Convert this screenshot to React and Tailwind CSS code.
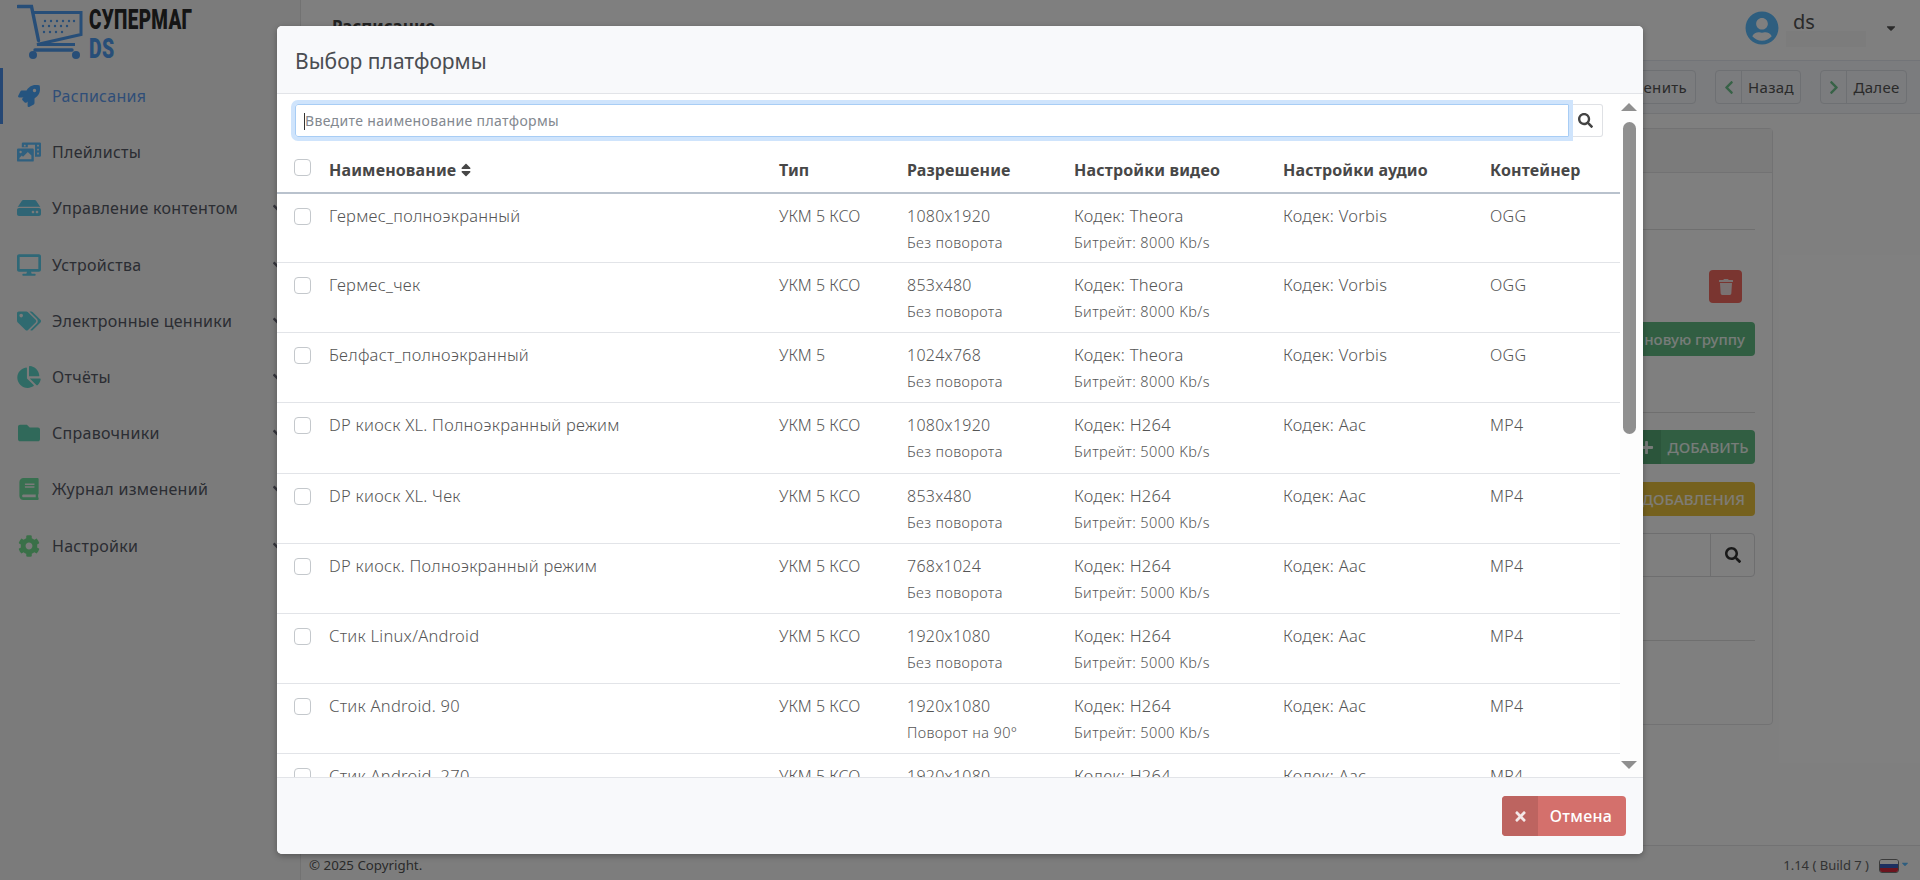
import React from "react";
import { FaRocket, FaPhotoVideo, FaHdd, FaDesktop, FaTags, FaChartPie, FaFolder, FaBook, FaCog, FaSearch, FaTimes, FaPlus, FaTrash, FaChevronLeft, FaChevronRight, FaUserCircle, FaSort, FaCaretDown, FaAngleDown } from "react-icons/fa";

const menu = [
  { t: "Расписания", I: FaRocket, c: "text-[#4aa8ff]", active: true },
  { t: "Плейлисты", I: FaPhotoVideo, c: "text-[#5ec0ff]" },
  { t: "Управление контентом", I: FaHdd, c: "text-[#5ecaea]", arrow: true },
  { t: "Устройства", I: FaDesktop, c: "text-[#5ed0ee]", arrow: true },
  { t: "Электронные ценники", I: FaTags, c: "text-[#5ed4e0]", arrow: true },
  { t: "Отчёты", I: FaChartPie, c: "text-[#5ed6ca]", arrow: true },
  { t: "Справочники", I: FaFolder, c: "text-[#60d2b4]", arrow: true },
  { t: "Журнал изменений", I: FaBook, c: "text-[#70e0a0]", arrow: true },
  { t: "Настройки", I: FaCog, c: "text-[#74e090]", arrow: true },
];

const T = "Кодек: Theora";
const H = "Кодек: H264";
const rows = [
  ["Гермес_полноэкранный", "УКМ 5 КСО", "1080x1920", "Без поворота", T, "Битрейт: 8000 Kb/s", "Кодек: Vorbis", "OGG"],
  ["Гермес_чек", "УКМ 5 КСО", "853x480", "Без поворота", T, "Битрейт: 8000 Kb/s", "Кодек: Vorbis", "OGG"],
  ["Белфаст_полноэкранный", "УКМ 5", "1024x768", "Без поворота", T, "Битрейт: 8000 Kb/s", "Кодек: Vorbis", "OGG"],
  ["DP киоск XL. Полноэкранный режим", "УКМ 5 КСО", "1080x1920", "Без поворота", H, "Битрейт: 5000 Kb/s", "Кодек: Aac", "MP4"],
  ["DP киоск XL. Чек", "УКМ 5 КСО", "853x480", "Без поворота", H, "Битрейт: 5000 Kb/s", "Кодек: Aac", "MP4"],
  ["DP киоск. Полноэкранный режим", "УКМ 5 КСО", "768x1024", "Без поворота", H, "Битрейт: 5000 Kb/s", "Кодек: Aac", "MP4"],
  ["Стик Linux/Android", "УКМ 5 КСО", "1920x1080", "Без поворота", H, "Битрейт: 5000 Kb/s", "Кодек: Aac", "MP4"],
  ["Стик Android. 90", "УКМ 5 КСО", "1920x1080", "Поворот на 90°", H, "Битрейт: 5000 Kb/s", "Кодек: Aac", "MP4"],
  ["Стик Android. 270", "УКМ 5 КСО", "1920x1080", "Поворот на 270°", H, "Битрейт: 5000 Kb/s", "Кодек: Aac", "MP4"],
];

function Check() {
  return <span className="block w-[17px] h-[17px] rounded-[4px] border border-[#c4c8cc] bg-white" />;
}

function Logo() {
  return (
    <div className="flex items-start h-[68px] pl-[17px] pt-[4px]">
      <svg width="66" height="56" viewBox="0 0 66 56" className="shrink-0 text-[#4f9cf0]" fill="none" stroke="currentColor">
        <path d="M1 2.5h13.5l7 34" strokeWidth="3.4" strokeLinecap="round" />
        <path d="M15 8.5h49v22l-44 10h38" strokeWidth="3" />
        <circle cx="16" cy="51" r="4" fill="currentColor" stroke="none" />
        <circle cx="59" cy="51" r="4" fill="currentColor" stroke="none" />
        <path d="M18 46h37" strokeWidth="3.4" strokeLinecap="round" />
        <g stroke="none" fill="currentColor">
          <circle cx="28" cy="17" r="1.2" /><circle cx="34" cy="17" r="1.2" /><circle cx="40" cy="17" r="1.2" /><circle cx="46" cy="17" r="1.2" /><circle cx="52" cy="17" r="1.2" /><circle cx="57" cy="17" r="1.2" />
          <circle cx="26" cy="22" r="1.2" /><circle cx="32" cy="22" r="1.2" /><circle cx="38" cy="22" r="1.2" /><circle cx="44" cy="22" r="1.2" /><circle cx="50" cy="22" r="1.2" />
          <circle cx="27" cy="28" r="1.2" /><circle cx="33" cy="28" r="1.2" /><circle cx="39" cy="28" r="1.2" /><circle cx="45" cy="28" r="1.2" />
        </g>
      </svg>
      <div className="ml-[6px] flex flex-col font-['Roboto',sans-serif]">
        <span className="block origin-left scale-x-[0.7] font-black text-[27px] leading-[28px] text-[#2a2a2a] tracking-[0.5px] whitespace-nowrap mt-[2px] h-[30px]">СУПЕРМАГ</span>
        <span className="block origin-left scale-x-[0.72] font-black text-[27px] leading-[26px] text-[#4f9cf0] tracking-[0.5px]">DS</span>
      </div>
    </div>
  );
}

function Sidebar() {
  return (
    <aside className="w-[300px] shrink-0 bg-[#f6f6f6] h-full">
      <Logo />
      <nav className="flex flex-col">
        {menu.map(({ t, I, c, active, arrow }) => (
          <div key={t} className={"h-[56.2px] flex items-center pl-[17px] border-l-[3px] " + (active ? "border-[#4a8fe8] text-[#5e9cf0]" : "border-transparent text-[#565a66]")}>
            <span className="w-[35px] shrink-0 -ml-[3px] flex"><I className={"w-[24px] h-[22px] " + c} /></span>
            <span className="text-[16px] whitespace-nowrap tracking-[0.28px]">{t}</span>
            {arrow && <FaAngleDown className="ml-auto mr-[14px] w-[16px] h-[16px] text-[#6a6a78]" />}
          </div>
        ))}
      </nav>
    </aside>
  );
}

function ToolBtn({ icon, label, w }) {
  return (
    <div className={"h-[34px] rounded-[4px] border border-[#dde0e6] flex items-center text-[15px] tracking-[0.3px] text-[#555] " + w}>
      <span className="w-[26px] h-full border-r border-[#dde0e6] flex items-center justify-center text-[#6fc48e]">{icon}</span>
      <span className="flex-1 text-center">{label}</span>
    </div>
  );
}

function Background() {
  return (
    <div className="absolute inset-0 flex bg-white">
      <Sidebar />
      <main className="flex-1 min-w-0 flex flex-col border-l border-[#e4e4e4]">
        <header className="h-[61px] flex items-start pl-[31px] pr-[22px] border-b border-[#e4e8f0]">
          <span className="mt-[14px] text-[17px] font-bold text-[#444]">Расписание</span>
          <div className="ml-auto flex items-start pt-[11px]">
            <FaUserCircle className="w-[34px] h-[34px] text-[#5cbcff]" />
            <div className="ml-[7px] w-[98px] flex flex-col">
              <span className="text-[20px] leading-[22px] ml-[7px] text-[#555]">ds</span>
              <span className="h-[16px] w-[80px] -mt-[2px] bg-[#f8f8f8]" />
            </div>
            <FaCaretDown className="mt-[10px] w-[14px] h-[14px] text-[#555]" />
          </div>
        </header>
        <div className="h-[53px] bg-[#f6f8fc] border-b border-[#e4e6ea] flex items-center justify-end gap-[19px] pr-[13px]">
          <div className="h-[34px] w-[130px] rounded-[4px] border border-[#dde0e6] flex items-center justify-end pr-[8px] text-[15px] tracking-[0.3px] text-[#555]">Применить</div>
          <ToolBtn icon={<FaChevronLeft className="w-[14px] h-[15px]" />} label="Назад" w="w-[86px]" />
          <ToolBtn icon={<FaChevronRight className="w-[14px] h-[15px]" />} label="Далее" w="w-[87px]" />
        </div>
        <div className="flex-1 min-h-0 flex flex-col pl-[30px] pr-[147px] pt-[14px]">
          <section className="h-[597px] rounded-[4px] border border-[#e4e4e6] flex flex-col items-end pr-[17px] bg-white">
            <div className="self-stretch -mr-[17px] h-[44px] bg-[#f6f6f6] border-b border-[#e4e4e6]" />
            <div className="mt-[56px] w-full h-px bg-[#dedede]" />
            <div className="mt-[40px] mr-[13px] w-[33px] h-[33px] rounded-[4px] bg-[#f46a60] flex items-center justify-center"><FaTrash className="w-[14px] h-[16px] text-[#f4e4e4]" /></div>
            <div className="mt-[19px] h-[34px] w-[250px] rounded-[4px] bg-[#62bc84] flex items-center justify-end pr-[10px] text-[15px] text-white/90 font-medium">Создать новую группу</div>
            <div className="mt-[56px] w-full h-px bg-[#dedede]" />
            <div className="mt-[17px] h-[34px] w-[250px] rounded-[4px] bg-[#62bc84] flex items-center text-[15px] text-white/90 font-medium overflow-hidden">
              <span className="ml-auto h-full w-[30px] bg-[#56aa76] flex items-center justify-center"><FaPlus className="w-[15px] h-[15px]" /></span>
              <span className="w-[94px] text-center">ДОБАВИТЬ</span>
            </div>
            <div className="mt-[18px] h-[34px] w-[250px] rounded-[4px] bg-[#eac23c] flex items-center justify-end pr-[10px] text-[15px] text-white/90 font-medium whitespace-nowrap overflow-hidden">ДЛЯ ДОДОБАВЛЕНИЯ</div>
            <div className="mt-[17px] h-[44px] w-[300px] rounded-[4px] border border-[#dcdcdf] flex justify-end">
              <span className="w-[44px] h-full border-l border-[#dcdcdf] flex items-center justify-center"><FaSearch className="w-[16px] h-[16px] text-[#333]" /></span>
            </div>
            <div className="mt-[63px] w-full h-px bg-[#dedede]" />
          </section>
        </div>
        <footer className="h-[35px] border-t border-[#e4e4e6] bg-[#fafafa] flex items-center pl-[8px] pr-[10px] pt-[6px] text-[13.3px] text-[#555]">
          <span>© 2025 Copyright.</span>
          <span className="ml-auto text-[13px] text-[#666]">1.14 ( Build 7 )</span>
          <span className="ml-[10px] w-[20px] h-[14px] rounded-[3px] overflow-hidden flex flex-col border border-[#777]">
            <span className="flex-1 bg-white" /><span className="flex-1 bg-[#3a5fc0]" /><span className="flex-1 bg-[#d8283c]" />
          </span>
          <FaCaretDown className="w-[10px] h-[10px] ml-[1px] -mt-[4px] text-[#5cbcff]" />
        </footer>
      </main>
    </div>
  );
}

function Modal() {
  const td = "pl-[12px] pt-[10px] leading-[24px] whitespace-nowrap tracking-[0.26px]";
  const big = td + " text-[16.5px]";
  const sub = "text-[14.5px] mt-[3px] leading-[22px] tracking-[0.4px]";
  const th = "pl-[12px] font-bold pb-[3px] tracking-[0.15px]";
  return (
    <div className="relative w-[1366px] h-[828px] mt-[26px] rounded-[5px] bg-white flex flex-col overflow-hidden shadow-[0_2px_6px_rgba(0,0,0,0.3)]">
      <header className="h-[68px] shrink-0 bg-[#f8f9fb] border-b border-[#e2e4e8] flex items-center pl-[18px] pt-[5px] text-[21px] text-[#4a4d52]">
        Выбор платформы
      </header>
      <div className="flex-1 min-h-0 flex">
        <div className="w-[1343px] shrink-0 overflow-hidden">
          <div className="flex pl-[18px] pt-[10px] pr-[17px] h-[57px]">
            <div className="relative flex-1 h-[33px] rounded-l-[3px] border border-[#a8cdf5] ring-4 ring-[#cfe4fc]">
              <input readOnly placeholder="Введите наименование платформы" className="w-full h-full outline-none pl-[9px] text-[14px] tracking-[0.35px] text-[#555] placeholder:text-[#83888f]" />
              <span className="absolute left-[8px] top-[8px] h-[17px] w-px bg-[#333]" />
            </div>
            <button className="w-[34px] h-[33px] rounded-r-[3px] border border-l-0 border-[#dfe1e5] flex items-center justify-center"><FaSearch className="w-[15px] h-[15px] text-[#444]" /></button>
          </div>
          <table className="w-[1343px] table-fixed border-collapse text-[16px] font-light text-[#555]">
            <colgroup>
              <col className="w-[40px]" /><col className="w-[450px]" /><col className="w-[128px]" /><col className="w-[167px]" /><col className="w-[209px]" /><col className="w-[207px]" /><col className="w-[142px]" />
            </colgroup>
            <thead>
              <tr className="h-[41.5px] border-b-[2px] border-[#b9c2cd] text-left text-[16px] text-[#474747]">
                <th className="pl-[17px] align-top pt-[8px]"><Check /></th>
                <th className={th}><span className="inline-flex items-center gap-[4px]">Наименование <FaSort className="w-[12px] h-[16px]" /></span></th>
                <th className={th}>Тип</th>
                <th className={th}>Разрешение</th>
                <th className={th}>Настройки видео</th>
                <th className={th}>Настройки аудио</th>
                <th className={th}>Контейнер</th>
              </tr>
            </thead>
            <tbody>
              {rows.map((r) => (
                <tr key={r[0]} className="h-[70.14px] border-b border-[#e2e4e8] align-top">
                  <td className="pl-[17px] pt-[14px]"><Check /></td>
                  <td className={big}>{r[0]}</td>
                  <td className="pl-[12px] pt-[10px] leading-[24px] whitespace-nowrap">{r[1]}</td>
                  <td className={td}>{r[2]}<div className={sub}>{r[3]}</div></td>
                  <td className={big}>{r[4]}<div className={sub}>{r[5]}</div></td>
                  <td className={big}>{r[6]}</td>
                  <td className={td}>{r[7]}</td>
                </tr>
              ))}
            </tbody>
          </table>
        </div>
        <div className="flex-1 bg-[#fdfdfd] flex flex-col items-center pl-[1px] pr-[6px] pt-[9px]">
          <span className="w-0 h-0 border-x-[8px] border-x-transparent border-b-[8px] border-b-[#8f8f8f]" />
          <span className="mt-[11px] w-[13px] h-[312px] rounded-[7px] bg-[#8f8f8f]" />
          <span className="mt-auto mb-[8px] w-0 h-0 border-x-[8px] border-x-transparent border-t-[8px] border-t-[#8f8f8f]" />
        </div>
      </div>
      <footer className="h-[77px] shrink-0 bg-[#f8f9fb] border-t border-[#e2e4e8] flex items-center justify-end pr-[17px]">
        <button className="w-[124px] h-[40px] rounded-[4px] bg-[#d4706c] flex items-center overflow-hidden text-white text-[16px] font-medium tracking-[0.3px]">
          <span className="w-[36px] h-full bg-[#bd6460] flex items-center justify-center"><FaTimes className="w-[15px] h-[15px] text-[#f4e8e8]" /></span>
          <span className="flex-1 text-center pr-[2px]">Отмена</span>
        </button>
      </footer>
    </div>
  );
}

export default function App() {
  return (
    <div className="relative w-full h-[880px] overflow-hidden font-['Noto_Sans',sans-serif]">
      <Background />
      <div className="absolute inset-0 bg-black/50 flex items-start pl-[277px]">
        <Modal />
      </div>
    </div>
  );
}
